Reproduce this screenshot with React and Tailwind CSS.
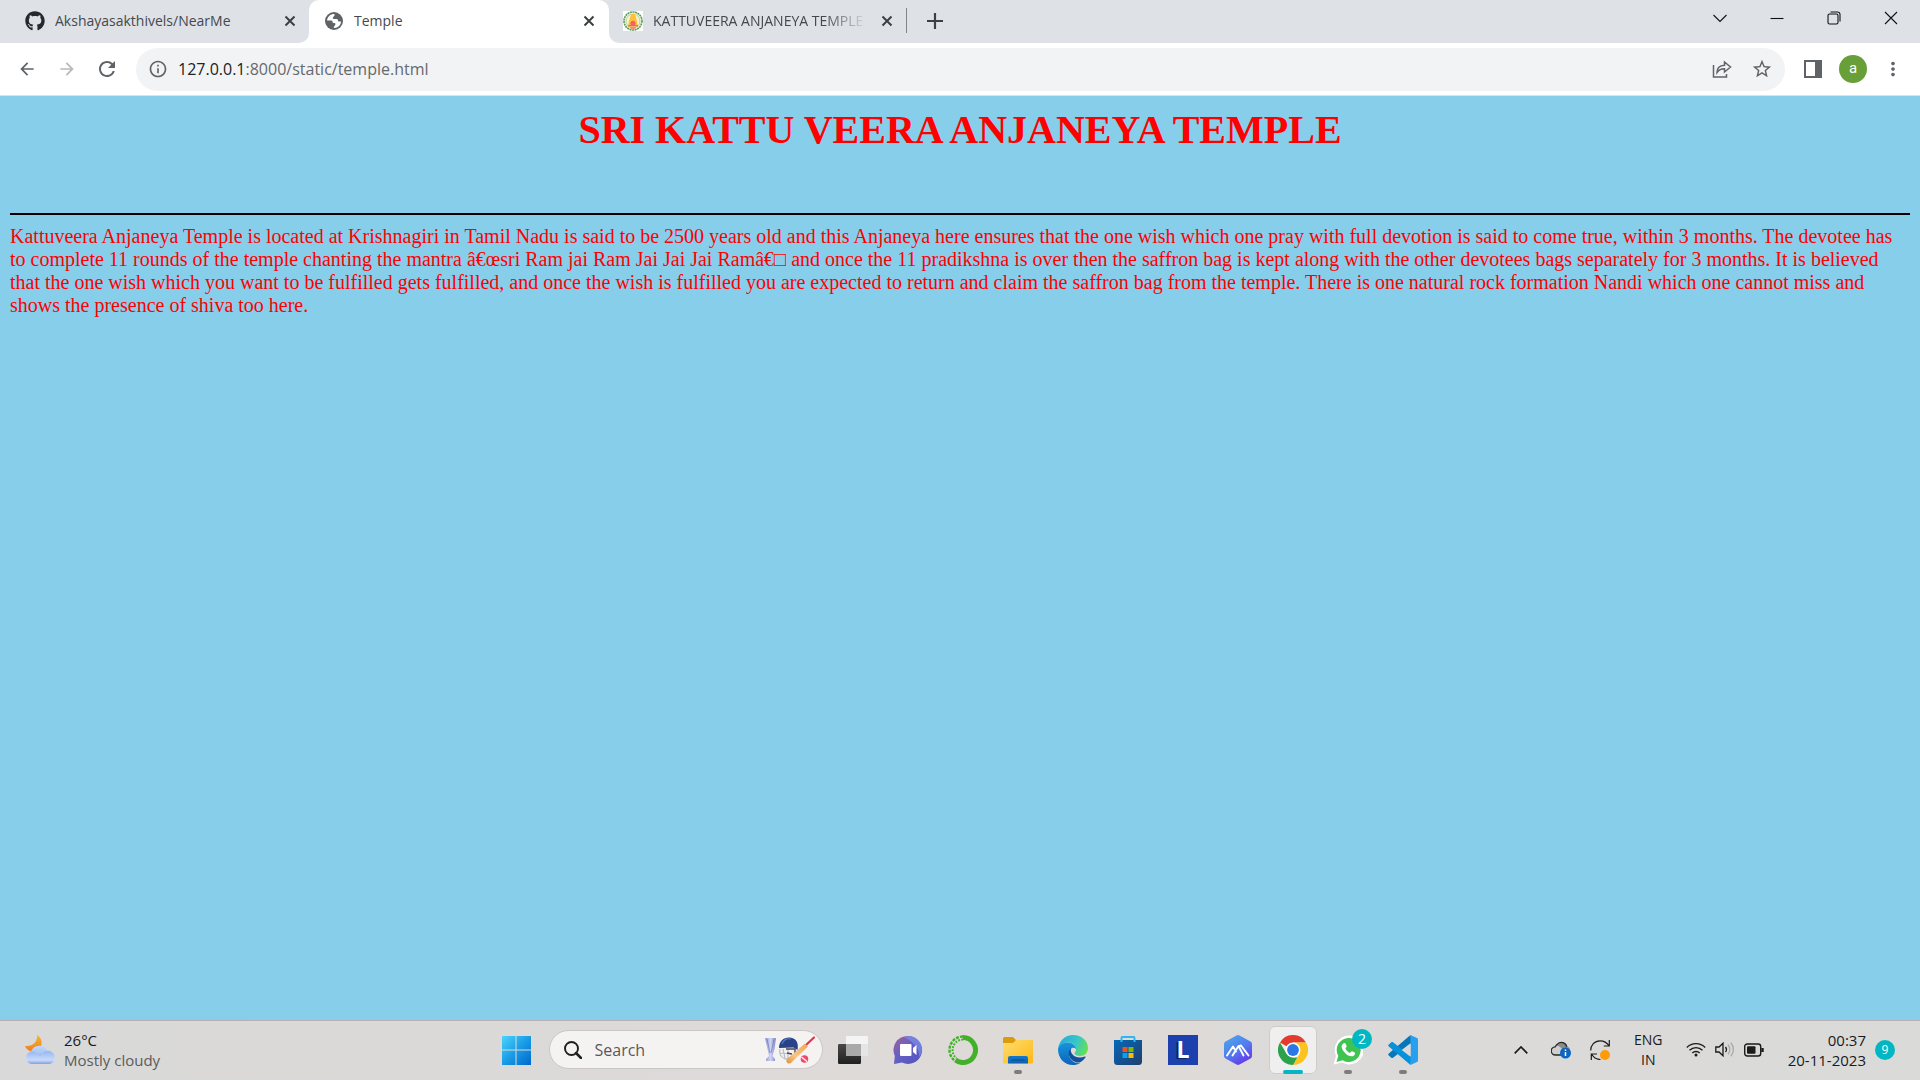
import React from "react";
import { FaGithub, FaWhatsapp } from "react-icons/fa";
import { MdRefresh, MdArrowBack, MdArrowForward, MdInfoOutline, MdStarBorder, MdMoreVert } from "react-icons/md";

function CloseMark() {
  return (
    <svg viewBox="0 0 12 12" className="h-3 w-3" fill="none" stroke="#3c4043" strokeWidth="2">
      <path d="M1.5 1.5l9 9M10.5 1.5l-9 9" />
    </svg>
  );
}

function TabClose({ label }) {
  return (
    <button type="button" aria-label={label} className="flex h-5 w-5 shrink-0 items-center justify-center rounded-full">
      <CloseMark />
    </button>
  );
}

function GlobeIcon() {
  return (
    <svg viewBox="0 0 20 20" className="h-5 w-5 shrink-0">
      <circle cx="10" cy="10" r="9" fill="#5f6368" />
      <path d="M3 10.500C3 6.500 5.500 3.500 9.500 3c1 0 1.500.5 1 1.500L9 6.500c-.5.700 0 1.500.8 1.500h2.700c1 0 1.500.7 1.500 1.500s.5 1 1.300 1h1.700c0 3.500-3 6.500-6.500 6.500-.8 0-1-.6-.6-1.200l1.300-1.800c.5-.8.2-1.700-.7-1.900l-1-.2c-.8-.2-1-.7-1-1.400 0-.8-.5-1-1.200-1H3z" fill="#fff" />
    </svg>
  );
}

function EmblemIcon() {
  return (
    <svg viewBox="0 0 20 20" className="h-5 w-5 shrink-0">
      <rect width="20" height="20" fill="#fff" />
      <circle cx="10" cy="10" r="9" fill="#f3f7e8" stroke="#5c9c5c" strokeWidth="1.6" strokeDasharray="2 0.6" />
      <circle cx="10" cy="10" r="7" fill="#f8f2c8" stroke="#8cbc7c" strokeWidth="0.6" />
      <path d="M8 3h4l1.4 5 1.4 6H5.2l1.4-6z" fill="#fcc13c" />
      <path d="M5 14h10v1.6H5z" fill="#e2852c" />
      <circle cx="10" cy="12.4" r="2.6" fill="#fb5f66" />
      <path d="M7 16h6l-1 2H8z" fill="#fb8a76" />
    </svg>
  );
}

function WindowButton({ label, children }) {
  return (
    <button type="button" aria-label={label} className="flex h-9 w-[57px] items-center justify-center">
      <svg viewBox="0 0 14 14" className="h-3.5 w-3.5" fill="none" stroke="#111" strokeWidth="1.1">
        {children}
      </svg>
    </button>
  );
}

function TabStrip() {
  return (
    <div className="flex h-[43px] bg-white text-[14px] text-[#45494d]">
      <div className="flex w-[309px] shrink-0 items-center rounded-br-[10px] bg-[#dee1e6] pr-[9px] pb-0.5 pl-[25px]">
        <FaGithub className="h-5 w-5 shrink-0 text-[#24292f]" />
        <span className="ml-2.5 flex-1 truncate">Akshayasakthivels/NearMe</span>
        <TabClose label="Close Akshayasakthivels/NearMe" />
      </div>
      <div className="w-[300px] shrink-0 bg-linear-to-b from-[#dee1e6] from-50% to-white to-50%">
        <div className="flex h-full items-center rounded-t-[10px] bg-white pr-2.5 pb-0.5 pl-[15px]">
          <GlobeIcon />
          <span className="ml-2.5 flex-1 truncate">Temple</span>
          <TabClose label="Close Temple" />
        </div>
      </div>
      <div className="flex min-w-0 flex-1 items-center rounded-bl-[10px] bg-[#dee1e6] pb-0.5 pl-3.5">
        <EmblemIcon />
        <span className="ml-2.5 w-[214px] shrink-0 overflow-hidden mask-r-from-80% whitespace-nowrap">KATTUVEERA ANJANEYA TEMPLE</span>
        <div className="ml-2.5 flex">
          <TabClose label="Close KATTUVEERA ANJANEYA TEMPLE" />
        </div>
        <div className="ml-[9px] h-[25px] w-px bg-[#80868b]" />
        <button type="button" aria-label="New tab" className="ml-[14px] flex h-7 w-7 items-center justify-center">
          <svg viewBox="0 0 16 16" className="h-4 w-4" stroke="#3c4043" strokeWidth="2.2">
            <path d="M8 0v16M0 8h16" />
          </svg>
        </button>
        <div className="ml-auto flex self-start pr-px">
          <WindowButton label="Search tabs"><path d="M0.5 4l6.5 6.5L13.5 4" /></WindowButton>
          <WindowButton label="Minimize"><path d="M0.5 7.5h13" /></WindowButton>
          <WindowButton label="Restore">
            <rect x="1" y="3" width="10" height="10" rx="1.5" />
            <path d="M3.5 1h7A2.5 2.5 0 0 1 13 3.500v7" />
          </WindowButton>
          <WindowButton label="Close window"><path d="M1 1l12 12M13 1L1 13" /></WindowButton>
        </div>
      </div>
    </div>
  );
}

function BarButton({ label, children, className = "" }) {
  return (
    <button type="button" aria-label={label} className={`flex h-10 w-10 shrink-0 items-center justify-center text-[#5f6368] ${className}`}>
      {children}
    </button>
  );
}

function Toolbar() {
  return (
    <div className="flex h-[53px] items-center border-b border-[#dfe1e5] bg-white px-[7px]">
      <BarButton label="Back"><MdArrowBack className="h-5 w-5" /></BarButton>
      <BarButton label="Forward" className="opacity-45"><MdArrowForward className="h-5 w-5" /></BarButton>
      <BarButton label="Reload"><MdRefresh className="h-6 w-6" /></BarButton>
      <div className="ml-[9px] flex h-[43px] min-w-0 flex-1 items-center rounded-full bg-[#f1f3f4] pr-[3px] pl-3">
        <button type="button" aria-label="Site information" className="text-[#5f6368]">
          <MdInfoOutline className="h-5 w-5" />
        </button>
        <div className="ml-2.5 min-w-0 flex-1 text-[16px] text-[#65696e]">
          <span className="text-[#202124]">127.0.0.1</span>:8000/static/temple.html
        </div>
        <BarButton label="Share">
          <svg viewBox="0 0 20 18" className="h-[18px] w-5" fill="none" stroke="currentColor" strokeWidth="1.5">
            <path d="M1.500 5v12h13v-3" />
            <path d="M5 12.500C5 8 8 5.500 12.500 5.200V2l6 5-6 5V8.800C9.500 8.800 7 9.500 5 12.500z" />
          </svg>
        </BarButton>
        <BarButton label="Bookmark this tab"><MdStarBorder className="h-[22px] w-[22px]" /></BarButton>
      </div>
      <BarButton label="Side panel" className="ml-2">
        <svg viewBox="0 0 18 18" className="h-[18px] w-[18px]">
          <rect width="18" height="18" fill="#5f6368" />
          <rect x="2" y="2" width="9" height="14" fill="#fff" />
        </svg>
      </BarButton>
      <BarButton label="Profile">
        <span className="flex h-7 w-7 items-center justify-center rounded-full bg-[#689f38] pb-px font-['Roboto',sans-serif] text-[15px] text-white">a</span>
      </BarButton>
      <BarButton label="Menu"><MdMoreVert className="h-[22px] w-[22px]" /></BarButton>
    </div>
  );
}

function Page() {
  return (
    <main className="flex-1 bg-[#87ceeb] px-2.5 font-['Liberation_Serif',serif] text-[#ff0000]">
      <h1 className="pt-[11px] text-center text-[40px] leading-[46px] font-bold">SRI KATTU VEERA ANJANEYA TEMPLE</h1>
      <hr className="mt-[60px] border-t-2 border-black" />
      <p className="mt-[10px] text-[20px] leading-[23px]">
        Kattuveera Anjaneya Temple is located at Krishnagiri in Tamil Nadu is said to be 2500 years old and this Anjaneya here ensures that the one wish which one pray with full devotion is said to come true, within 3 months. The devotee has to complete 11 rounds of the temple chanting the mantra â€œsri Ram jai Ram Jai Jai Jai Ramâ€□ and once the 11 pradikshna is over then the saffron bag is kept along with the other devotees bags separately for 3 months. It is believed that the one wish which you want to be fulfilled gets fulfilled, and once the wish is fulfilled you are expected to return and claim the saffron bag from the temple. There is one natural rock formation Nandi which one cannot miss and shows the presence of shiva too here.
      </p>
    </main>
  );
}

function TaskButton({ label, children, state = "closed" }) {
  return (
    <button type="button" aria-label={label} className="flex h-12 w-[55px] shrink-0 items-center justify-center">
      <span className={state === "active" ? "relative flex h-12 w-12 items-center justify-center rounded-md border border-[#cfcdcc] bg-[#efefef]" : "relative flex h-12 w-12 items-center justify-center"}>
        {children}
        {state === "open" && <span className="absolute bottom-0 left-5 h-1 w-2 rounded-full bg-[#7f7d7b]" />}
        {state === "active" && <span className="absolute -bottom-px left-[13px] h-1 w-5 rounded-full bg-[#00b7c3]" />}
      </span>
    </button>
  );
}

function Icon({ children }) {
  return <svg viewBox="0 0 30 30" className="h-[30px] w-[30px]">{children}</svg>;
}

function WindowsLogo() {
  return (
    <Icon>
      <defs>
        <linearGradient id="win" x1="0" y1="0" x2="30" y2="30" gradientUnits="userSpaceOnUse">
          <stop stopColor="#50d8ff" /><stop offset="0.5" stopColor="#1a9ee6" /><stop offset="1" stopColor="#0068cc" />
        </linearGradient>
      </defs>
      <path fill="url(#win)" d="M1 1h13.500v13.500H1zM15.500 1H30v13.500H15.500zM1 15.500h13.500V30H1zM15.500 15.500H30V30H15.500z" />
    </Icon>
  );
}

function CricketArt() {
  return (
    <svg viewBox="0 0 50 28" className="h-7 w-[50px] shrink-0">
      <defs>
        <linearGradient id="cup"><stop stopColor="#8e94cf" /><stop offset="0.5" stopColor="#cfd6f5" /><stop offset="1" stopColor="#7f86c4" /></linearGradient>
        <linearGradient id="bat" x1="1" y1="0" x2="0" y2="1"><stop stopColor="#f0a550" /><stop offset="0.600" stopColor="#f8c684" /><stop offset="1" stopColor="#e0913c" /></linearGradient>
      </defs>
      <path d="M0 2h11L9.500 13 7.500 20l2.500 3v2H1v-2l3-3-1.500-7z" fill="url(#cup)" />
      <path d="M2 3l3 14M9 3L6 17" stroke="#6f75b5" strokeWidth="0.7" fill="none" />
      <path d="M15 13c-1 4 1 8 5 10l7-2M15 17l11 1M18 13l2 9M23 13v9" stroke="#b9bbc4" strokeWidth="1.200" fill="none" />
      <path d="M21 13h9v5l-3 3M22 17l5 1" stroke="#4b4653" strokeWidth="1.400" fill="none" />
      <path d="M14 12C14 5 19 1 25 1.500 31 2 34 7 32.500 14l-4-2.500z" fill="#27438a" />
      <path d="M17 8c1-4 5-6 9-5" stroke="#5a7bc0" strokeWidth="1.2" fill="none" />
      <path d="M41 9l8-7.500" stroke="#e6334e" strokeWidth="2.200" strokeLinecap="round" />
      <path d="M40 7.500l3 3L26 27c-2.500 1.500-5.500-.5-4.500-3.500z" fill="url(#bat)" />
      <circle cx="39.500" cy="23" r="3.800" fill="#f04868" />
      <path d="M36.500 21l5.500 4.500" stroke="#fff" strokeWidth="1.200" />
    </svg>
  );
}

function TaskView() {
  return (
    <Icon>
      <defs><linearGradient id="tvd" x2="0" y2="1"><stop stopColor="#484848" /><stop offset="1" stopColor="#202020" /></linearGradient></defs>
      <rect x="0" y="9" width="23" height="20" rx="1.200" fill="url(#tvd)" />
      <rect x="8" y="1" width="22" height="20" rx="1.200" fill="#f4f4f4" />
      <path d="M8 9h15v12H8z" fill="#a9a9a9" />
      <path d="M23 9h7v11l-1 1h-6z" fill="#e5e5e5" />
    </Icon>
  );
}

function ChatLogo() {
  return (
    <Icon>
      <defs><linearGradient id="chat" x1="0" y1="0" x2="1" y2="1"><stop stopColor="#a0619a" /><stop offset="0.45" stopColor="#6560c4" /><stop offset="1" stopColor="#5052bd" /></linearGradient></defs>
      <path d="M15 1a14 14 0 1 1-6 26.600L1 29l.8-8A14 14 0 0 1 15 1z" fill="url(#chat)" />
      <path d="M16 1a14 14 0 0 1 13 13c0 3-1 6-3 8 1-8-5-15-15-20z" fill="#7b8fee" opacity="0.700" />
      <rect x="7" y="9" width="11.500" height="12" rx="1" fill="#fff" />
      <path d="M20 13l3.500-3v10L20 17z" fill="#fff" />
    </Icon>
  );
}

function AnacondaLogo() {
  return (
    <Icon>
      <path d="M15 2.500a12.500 12.500 0 1 1-7.500 22.500" fill="none" stroke="#43b02a" strokeWidth="5" />
      <path d="M15 1.500A13.500 13.500 0 0 0 6.500 25.500" fill="none" stroke="#43b02a" strokeWidth="2.400" strokeDasharray="3 1.200" />
      <path d="M15 4.500A10.500 10.500 0 0 0 8.500 23.200" fill="none" stroke="#43b02a" strokeWidth="2" strokeDasharray="1.800 1.300" />
    </Icon>
  );
}

function ExplorerLogo() {
  return (
    <Icon>
      <defs>
        <linearGradient id="fold" x1="0" y1="0" x2="1" y2="1"><stop stopColor="#ffdd70" /><stop offset="1" stopColor="#fdb813" /></linearGradient>
        <linearGradient id="pocket" x2="0" y2="1"><stop stopColor="#1478cd" /><stop offset="1" stopColor="#0f62b0" /></linearGradient>
      </defs>
      <path d="M0 3.500A1.500 1.500 0 0 1 1.500 2H10l3 3h15.500A1.500 1.500 0 0 1 30 6.500V12H0z" fill="#dd9a0c" />
      <path d="M0 8h10l3-3h15.500A1.500 1.500 0 0 1 30 6.500V27a1.500 1.500 0 0 1-1.500 1.500h-27A1.500 1.500 0 0 1 0 27z" fill="url(#fold)" />
      <path d="M5 28.500V23a2 2 0 0 1 2-2h16a2 2 0 0 1 2 2v5.500z" fill="url(#pocket)" />
      <path d="M9 25h12" stroke="#0a4a8a" strokeWidth="1.200" strokeLinecap="round" />
    </Icon>
  );
}

function EdgeLogo() {
  return (
    <Icon>
      <defs>
        <linearGradient id="edgeTop" x1="0" y1="0.300" x2="1" y2="0.600"><stop stopColor="#2aa9e0" /><stop offset="0.550" stopColor="#36c6c9" /><stop offset="1" stopColor="#66e052" /></linearGradient>
        <linearGradient id="edgeLow" x2="0" y2="1"><stop stopColor="#1695dc" /><stop offset="1" stopColor="#0b63bd" /></linearGradient>
      </defs>
      <path d="M0 14C1 6 7 0 15 0c9 0 15 6 15 13 0 5-3.500 8-8 8-3.500 0-5.500-1.300-5.500-2.400 0-.9 1.500-1.600 1.500-4C18 10 14 7.500 10 7.500 5 7.500 1.500 10 0 14z" fill="url(#edgeTop)" />
      <path d="M0 14c1.500-4.500 5-6.500 10-6.500 4 0 8 3 8 6.500-3-3-7 0-7 5 0 6 6 10 11 9-2 1.500-4.500 2-7 2C6 30 0 23 0 14z" fill="url(#edgeLow)" />
      <path d="M13 13.200c-1.500 1-2.300 2.800-2.300 5 0 5.300 5 9.800 11 9.300 2.300-1.200 4.600-3.200 5.800-5.300.3-.6-.2-.9-.7-.6-4.800 2-10.800.8-13-3-1-1.700-1.300-3.600-.8-5.400z" fill="#11519b" />
    </Icon>
  );
}

function StoreLogo() {
  return (
    <Icon>
      <defs><linearGradient id="store" x1="0" y1="0" x2="1" y2="1"><stop stopColor="#0669b9" /><stop offset="1" stopColor="#1f3e6c" /></linearGradient></defs>
      <path d="M8.500 7V3A1 1 0 0 1 9.500 2h11a1 1 0 0 1 1 1v4" fill="none" stroke="#29b8f0" strokeWidth="2" />
      <path d="M1 5h28v21.500a3.500 3.500 0 0 1-3.500 3.500h-21A3.500 3.500 0 0 1 1 26.500z" fill="url(#store)" />
      <path d="M8.500 5v2M21.500 5v2" stroke="#29c0f0" strokeWidth="2" />
      <path d="M9.500 12h5v5h-5z" fill="#f25022" /><path d="M15.500 12h5v5h-5z" fill="#7fba00" />
      <path d="M9.500 18h5v5h-5z" fill="#00a4ef" /><path d="M15.500 18h5v5h-5z" fill="#ffb900" />
    </Icon>
  );
}

function LensLogo() {
  return (
    <span className="flex h-[30px] w-[30px] items-center justify-center bg-[#1d40af] font-['Open_Sans',sans-serif] text-[23px] leading-none font-bold text-white [text-shadow:-2px_1px_0_#10245f]">L</span>
  );
}

function HexLogo() {
  return (
    <Icon>
      <defs><linearGradient id="hex" x1="0.200" y1="0" x2="0.800" y2="1"><stop stopColor="#4ba5ea" /><stop offset="0.500" stopColor="#527bf0" /><stop offset="1" stopColor="#6a2ee8" /></linearGradient></defs>
      <path d="M13.500.5a3 3 0 0 1 3 0l11 6A3 3 0 0 1 29 9v12a3 3 0 0 1-1.500 2.500l-11 6a3 3 0 0 1-3 0l-11-6A3 3 0 0 1 1 21V9a3 3 0 0 1 1.500-2.500z" fill="url(#hex)" />
      <path d="M4 20.500L10 11.500l3 5M9.500 20.500l6-9.500 5 9.500M15.500 11.500l2.500-1 7.500 10" fill="none" stroke="#fff" strokeWidth="1.900" strokeLinecap="round" strokeLinejoin="round" />
    </Icon>
  );
}

function ChromeLogo() {
  return (
    <Icon>
      <path d="M15 15L2 7.500A15 15 0 0 1 28 7.500H15z" fill="#e33b2e" />
      <path d="M15 7.500h13A15 15 0 0 1 15 30l6.500-11.250z" fill="#fcc31e" />
      <path d="M2 7.500L8.500 18.750 15 22.500h4.300L15 30A15 15 0 0 1 2 7.500z" fill="#2da14c" />
      <circle cx="15" cy="15" r="7.500" fill="#fff" />
      <circle cx="15" cy="15" r="5.900" fill="#2a78e6" />
    </Icon>
  );
}

function WhatsAppLogo() {
  return (
    <>
      <Icon>
        <path d="M15.500 0.500a14.500 14.500 0 1 1-6.500 27L0.500 29.500 3 21A14.500 14.500 0 0 1 15.500.5z" fill="#fff" />
        <path d="M15.500 3a12 12 0 1 1-6 22.300L3.500 27l1.800-6A12 12 0 0 1 15.500 3z" fill="#3fc351" />
        <path d="M10.500 8.500c.8-.7 1.700-.6 2.100.3l1 2.300c.3.800-.9 1.800-1.200 2.300.9 2 2.500 3.500 4.600 4.500.6-.5 1.400-1.900 2.100-1.600l2.500 1.200c1.200.6-.2 3.300-1.800 3.700-2.800.7-5.500-1-7.500-2.900-2-2-4-4.800-3.700-7.200.1-1 .9-1.800 1.900-2.600z" fill="#fff" />
      </Icon>
      <span className="absolute top-[3px] right-0 flex h-5 w-5 items-center justify-center rounded-full bg-[#00b7c3] text-[14px] text-white">2</span>
    </>
  );
}

function CodeLogo() {
  return (
    <Icon>
      <path d="M22.500 0l1.500 8L5 22.800c-.6.400-1.200.3-1.700-.1L.8 20.500c-.8-.7-.8-1.400 0-2z" fill="#0877b9" />
      <path d="M22.500 30l1.500-8L5 7.200c-.6-.4-1.200-.3-1.700.1L.8 9.500c-.8.700-.8 1.400 0 2z" fill="#0791db" />
      <path d="M22.500 0L29 3c.7.300 1 .8 1 1.500v21c0 .7-.3 1.200-1 1.500l-6.500 3z" fill="#28a0ee" />
      <path d="M22.500 8.300v13.400L13.700 15z" fill="#dcdad8" />
    </Icon>
  );
}

function WeatherIcon() {
  return (
    <svg viewBox="0 0 30 30" className="h-[30px] w-[30px]">
      <defs>
        <linearGradient id="cloud" x2="0" y2="1"><stop stopColor="#c3d8fb" /><stop offset="1" stopColor="#83a5e9" /></linearGradient>
        <linearGradient id="cloudFront" x2="0" y2="1"><stop stopColor="#8fb1f0" /><stop offset="0.700" stopColor="#d3e2fc" /><stop offset="1" stopColor="#7d9fe4" /></linearGradient>
        <linearGradient id="moon" x2="0" y2="1"><stop stopColor="#f8b52e" /><stop offset="1" stopColor="#ee7f1e" /></linearGradient>
      </defs>
      <path d="M12 0c1 6-4 12-12 11 1.500 3.500 5 6 9 5.500 6-.8 9-7 7-12C15.200 2.500 13.800 1 12 0z" fill="url(#moon)" />
      <path d="M7 29a6.500 6.500 0 0 1-1-12.500A9 9 0 0 1 22.500 16 6.500 6.500 0 0 1 23 29z" fill="url(#cloud)" />
      <path d="M7 29a6.300 6.300 0 1 1 5-10.500c1.500.8 2.500 2 3 3.500 2-5 6-7 10-6 3 1 5 3.500 5 6.500 0 4-3 6.500-6.500 6.500z" fill="url(#cloudFront)" opacity="0.850" />
    </svg>
  );
}

function TrayButton({ label, children, className }) {
  return (
    <button type="button" aria-label={label} className={`flex h-10 shrink-0 items-center justify-center ${className}`}>
      {children}
    </button>
  );
}

function Tray() {
  return (
    <div className="flex items-center justify-end pr-[25px] text-right text-[14px] leading-5 text-[#1b1b1b]">
      <TrayButton label="Show hidden icons" className="w-10">
        <svg viewBox="0 0 14 8" className="h-2 w-3.5" fill="none" stroke="#1b1b1b" strokeWidth="1.700"><path d="M.7 7.300L7 1l6.300 6.300" /></svg>
      </TrayButton>
      <TrayButton label="OneDrive" className="w-10">
        <svg viewBox="0 0 20 18" className="h-[18px] w-5">
          <path d="M4.500 13.500a4 4 0 0 1 0-8C6 2 9.500.6 12 1.500c2.500.7 3.500 2 4 4 2 .5 3 2 3 4H9v4z" fill="#8b8b8b" />
          <path d="M4.500 13.500a4 4 0 0 1 0-8C6.500 4.500 8.500 5 10 7l3 2-3 4.500z" fill="#cfcfcf" />
          <path d="M10 14H4.500a4 4 0 0 1-.3-8.200C6 2 9.500.8 12 1.600c2.200.7 3.400 2 3.800 4.200" fill="none" stroke="#2a2a2a" strokeWidth="1.300" />
          <circle cx="14.500" cy="12" r="5.500" fill="#0a66c2" />
          <path d="M14.500 8.500v1.500M14.500 11v4" stroke="#fff" strokeWidth="1.500" />
        </svg>
      </TrayButton>
      <TrayButton label="Windows Update" className="w-[38px]">
        <svg viewBox="0 0 20 20" className="h-5 w-5" fill="none" stroke="#1b1b1b" strokeWidth="1.200">
          <path d="M.7 10.500C.7 5 4.500.8 10 .8c4 0 7 1.700 9 5M19.300 0v6h-5.500" />
          <path d="M10.500 19.500C6.500 19.500 3.500 17.500 1.500 14M1.300 20v-6H7" />
          <circle cx="15" cy="15" r="5" fill="#ff9a0a" stroke="none" />
        </svg>
      </TrayButton>
      <button type="button" className="w-[59px] text-center">ENG<br />IN</button>
      <button type="button" aria-label="Network, volume and battery" className="flex w-[94px] items-center justify-center gap-[9px]">
        <svg viewBox="0 0 20 15" className="h-[15px] w-5" fill="none" stroke="#1b1b1b" strokeWidth="1.300">
          <path d="M.8 5.500a13 13 0 0 1 18.400 0M3.500 8.300a9.200 9.200 0 0 1 13 0M6.300 11a5.300 5.300 0 0 1 7.400 0" />
          <circle cx="10" cy="13" r="1.500" fill="#1b1b1b" stroke="none" />
        </svg>
        <svg viewBox="0 0 20 15" className="h-[15px] w-5" fill="none" stroke="#1b1b1b" strokeWidth="1.300">
          <path d="M.8 5v5H4l4 3.800V1.200L4 5z" />
          <path d="M10.500 5a4 4 0 0 1 0 5" />
          <path d="M13 2.800a7 7 0 0 1 0 9.400M15.800.8a10 10 0 0 1 0 13.400" stroke="#a9a9a9" />
        </svg>
        <svg viewBox="0 0 20 14" className="h-3.5 w-5" fill="none" stroke="#1b1b1b" strokeWidth="1.400">
          <rect x=".7" y="1" width="16" height="12" rx="2.500" />
          <rect x="3" y="3.300" width="8.500" height="7.400" rx="1" fill="#1b1b1b" stroke="none" />
          <path d="M18.500 5v4" strokeWidth="2.400" />
        </svg>
      </button>
      <button type="button" className="ml-4 text-right text-[15px] leading-5 whitespace-nowrap">00:37<br />20-11-2023</button>
      <button type="button" aria-label="9 notifications" className="ml-[9px] flex h-5 w-5 items-center justify-center rounded-full bg-[#00b7c3] text-[12px] text-white">9</button>
    </div>
  );
}

function Taskbar() {
  return (
    <footer className="grid h-[60px] grid-cols-[1fr_auto_1fr] items-center border-t border-[#b5b1b2] bg-linear-to-r from-[#d9d9d9] via-[#dedad8] to-[#dadad9] pb-0.5">
      <button type="button" className="flex items-center pl-[25px] text-left text-[15px] leading-5">
        <WeatherIcon />
        <span className="ml-[9px]">
          <span className="block text-[#1b1b1b]">26°C</span>
          <span className="block text-[#5c5b5a]">Mostly cloudy</span>
        </span>
      </button>
      <nav aria-label="Taskbar" className="flex items-center pr-px">
        <TaskButton label="Start"><WindowsLogo /></TaskButton>
        <label className="mr-[3px] ml-[5px] flex h-[39px] w-[274px] items-center rounded-full border border-[#c9c6c4] bg-[#f5f3f2] pr-[7px] pl-3.5">
          <svg viewBox="0 0 18 18" className="h-[18px] w-[18px] shrink-0" fill="none" stroke="#1f1f1f">
            <circle cx="7.500" cy="7.500" r="6.500" strokeWidth="1.900" />
            <path d="M12 12l5 5" strokeWidth="2.500" strokeLinecap="round" />
          </svg>
          <input type="text" aria-label="Search" placeholder="Search" className="ml-[13px] min-w-0 flex-1 bg-transparent text-[16px] outline-none placeholder:text-[#5a5958]" />
          <CricketArt />
        </label>
        <TaskButton label="Task view"><TaskView /></TaskButton>
        <TaskButton label="Chat"><ChatLogo /></TaskButton>
        <TaskButton label="Anaconda"><AnacondaLogo /></TaskButton>
        <TaskButton label="File Explorer" state="open"><ExplorerLogo /></TaskButton>
        <TaskButton label="Microsoft Edge"><EdgeLogo /></TaskButton>
        <TaskButton label="Microsoft Store"><StoreLogo /></TaskButton>
        <TaskButton label="L"><LensLogo /></TaskButton>
        <TaskButton label="AI app"><HexLogo /></TaskButton>
        <TaskButton label="Google Chrome" state="active"><ChromeLogo /></TaskButton>
        <TaskButton label="WhatsApp" state="open"><WhatsAppLogo /></TaskButton>
        <TaskButton label="Visual Studio Code" state="open"><CodeLogo /></TaskButton>
      </nav>
      <Tray />
    </footer>
  );
}

export default function App() {
  return (
    <div className="flex min-h-screen flex-col font-['Open_Sans','Noto_Sans',sans-serif]">
      <header>
        <TabStrip />
        <Toolbar />
      </header>
      <Page />
      <Taskbar />
    </div>
  );
}
